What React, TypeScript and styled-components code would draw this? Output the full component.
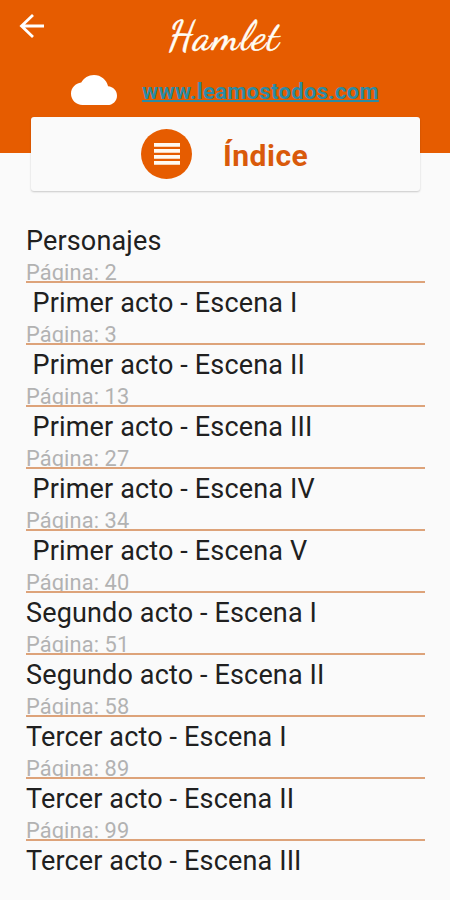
import React from "react";
import styled, { createGlobalStyle } from "styled-components";

const GlobalStyle = createGlobalStyle`
  * { box-sizing: border-box; }
  html, body { margin: 0; background: #fafafa; }
  body { font-family: Roboto, "Liberation Sans", sans-serif; overflow: hidden; }
`;

const Screen = styled.main`
  width: 450px;
  height: 900px;
  overflow: hidden;
  background: #fafafa;
`;

const Header = styled.header`
  height: 153px;
  background: #e65c00;
`;

const TopBar = styled.div`
  display: grid;
  grid-template-columns: 168px auto 1fr;
  height: 72px;
`;

const BackButton = styled.button`
  width: 26px;
  height: 26px;
  margin: 13px 0 0 19px;
  padding: 0;
  border: 0;
  background: none;
  svg { display: block; }
`;

const Title = styled.h1`
  margin: 11px 0 0;
  font: 400 41px/50px "Dancing Script", cursive;
  letter-spacing: 1.5px;
  -webkit-text-stroke: 0.5px #fffdf5;
  color: #fffdf5;
  transform: skewX(-5deg);
`;

const SiteRow = styled.div`
  display: flex;
  align-items: flex-start;
  padding-left: 71px;
  svg { display: block; margin-top: 3px; }
`;

const SiteLink = styled.a`
  margin: 7px 0 0 25px;
  font-size: 22px;
  line-height: 25px;
  letter-spacing: 0.32px;
  font-weight: 700;
  color: #2b8ba5;
  text-decoration: underline;
  text-decoration-thickness: 1.5px;
  text-underline-offset: 1px;
  text-decoration-skip-ink: none;
`;

const IndexCard = styled.section`
  position: relative;
  display: flex;
  align-items: center;
  width: 389px;
  height: 74px;
  margin: -36px 0 0 31px;
  padding-left: 110px;
  border-radius: 3px;
  background: #fafafa;
  box-shadow: 0 1px 2px rgba(0, 0, 0, 0.2);
`;

const IndexBadge = styled.span`
  display: grid;
  place-items: center;
  width: 51px;
  height: 50px;
  border-radius: 50%;
  background: #e65c00;
`;

const CardTitle = styled.h2`
  margin: 4px 0 0 31px;
  font-size: 30px;
  line-height: 36px;
  letter-spacing: 0.5px;
  font-weight: 700;
  color: #d95a0b;
`;

const Chapters = styled.ul`
  margin: 30px 25px 0 26px;
  padding: 0;
  list-style: none;
`;

const Chapter = styled.li`
  display: flex;
  flex-direction: column;
  height: 62px;
  border-bottom: 2px solid #dda37a;
  overflow: hidden;
  &:last-child { border-bottom: 0; }
`;

const ChapterTitle = styled.span<{ $indent?: boolean }>`
  padding-left: ${(p) => (p.$indent ? 6.5 : 0)}px;
  height: 39px;
  font-size: 27px;
  line-height: 40px;
  letter-spacing: 0.15px;
  color: #202020;
  white-space: nowrap;
`;

const PageLabel = styled.span`
  height: 21px;
  overflow: hidden;
  font-size: 21.8px;
  line-height: 25px;
  letter-spacing: 0.12px;
  color: #b2b2b2;
`;

type Entry = { title: string; page?: number; indent?: boolean };

const entries: Entry[] = [
  { title: "Personajes", page: 2 },
  { title: "Primer acto - Escena I", page: 3, indent: true },
  { title: "Primer acto - Escena II", page: 13, indent: true },
  { title: "Primer acto - Escena III", page: 27, indent: true },
  { title: "Primer acto - Escena IV", page: 34, indent: true },
  { title: "Primer acto - Escena V", page: 40, indent: true },
  { title: "Segundo acto - Escena I", page: 51 },
  { title: "Segundo acto - Escena II", page: 58 },
  { title: "Tercer acto - Escena I", page: 89 },
  { title: "Tercer acto - Escena II", page: 99 },
  { title: "Tercer acto - Escena III" },
];

export default function App() {
  return (
    <Screen>
      <GlobalStyle />
      <Header>
        <TopBar>
          <BackButton aria-label="Atrás">
            <svg width="26" height="26" viewBox="0 0 26 26" fill="none" stroke="#fff" strokeWidth="2.8">
              <path d="M25 13H2.5M14 2L2.5 13L14 24" />
            </svg>
          </BackButton>
          <Title>Hamlet</Title>
        </TopBar>
        <SiteRow>
          <svg width="46" height="30" viewBox="0 4 24 16" preserveAspectRatio="none" fill="#fff">
            <path d="M19.35 10.04C18.67 6.59 15.64 4 12 4 9.11 4 6.6 5.64 5.35 8.04 2.34 8.36 0 10.91 0 14c0 3.31 2.69 6 6 6h13c2.76 0 5-2.24 5-5 0-2.64-2.05-4.78-4.65-4.96z" />
          </svg>
          <SiteLink>www.leamostodos.com</SiteLink>
        </SiteRow>
      </Header>
      <IndexCard>
        <IndexBadge>
          <svg width="26" height="24" viewBox="0 0 26 24" fill="#fffaf2">
            <path d="M0 1h26v3.8H0zM0 7h26v3.8H0zM0 13h26v3.8H0zM0 19h26v3.8H0z" />
          </svg>
        </IndexBadge>
        <CardTitle>Índice</CardTitle>
      </IndexCard>
      <Chapters>
        {entries.map((entry) => (
          <Chapter key={entry.title}>
            <ChapterTitle $indent={entry.indent}>{entry.title}</ChapterTitle>
            {entry.page !== undefined && <PageLabel>Página: {entry.page}</PageLabel>}
          </Chapter>
        ))}
      </Chapters>
    </Screen>
  );
}
